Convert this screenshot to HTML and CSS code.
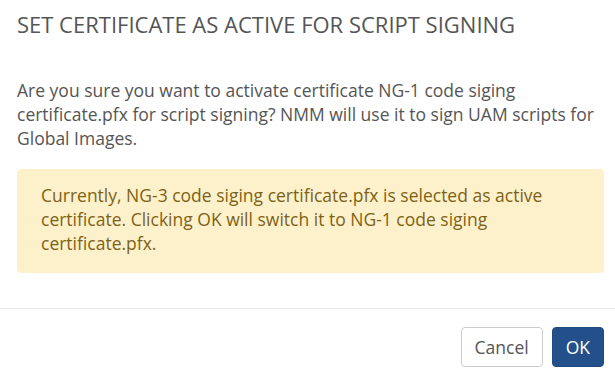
FILE: index.html
```html
<!DOCTYPE html>
<html>
<head>
<meta charset="utf-8">
<link rel="stylesheet" href="styles.css">
</head>
<body>
<div class="modal">
  <div class="modal-header">
    <h4 class="modal-title">SET CERTIFICATE AS ACTIVE FOR SCRIPT SIGNING</h4>
  </div>
  <div class="modal-body">
    <p class="message">Are you sure you want to activate certificate NG-1 code siging certificate.pfx for script signing? NMM will use it to sign UAM scripts for Global Images.</p>
    <div class="alert">Currently, NG-3 code siging certificate.pfx is selected as active certificate. Clicking OK will switch it to NG-1 code siging certificate.pfx.</div>
  </div>
  <div class="modal-footer">
    <button class="btn btn-default">Cancel</button>
    <button class="btn btn-primary">OK</button>
  </div>
</div>
</body>
</html>
```
FILE: styles.css
```css
* { box-sizing: border-box; }
html, body { margin: 0; padding: 0; background: #fff; }
body {
  font-family: "Open Sans", "Liberation Sans", sans-serif;
  color: #555;
  width: 615px;
  height: 372px;
  overflow: hidden;
}
.modal-header {
  padding: 9px 17px 0 17px;
}
.modal-title {
  margin: 0;
  font-size: 22px;
  font-weight: 400;
  line-height: 30px;
  color: #555;
}
.modal-body {
  padding: 39px 11px 0 17px;
}
.message {
  margin: 0 0 19px 0;
  font-size: 17.5px;
  line-height: 24px;
}
.alert {
  background: #fdf1cc;
  color: #7d6215;
  border-radius: 4px;
  padding: 14px 20px 18px 24px;
  font-size: 17.5px;
  line-height: 24px;
}
.modal-footer {
  margin-top: 35px;
  border-top: 1px solid #e5e5e5;
  padding: 18px 11px 0 0;
  display: flex;
  justify-content: flex-end;
  gap: 9px;
}
.btn {
  font-family: "Open Sans", "Liberation Sans", sans-serif;
  font-size: 17.5px;
  height: 40px;
  border-radius: 4px;
  padding: 0 13px;
  cursor: pointer;
}
.btn-default {
  background: #fff;
  color: #555;
  border: 1px solid #ccc;
}
.btn-primary {
  background: #23508a;
  color: #fff;
  border: 1px solid #1f4a80;
}
```
